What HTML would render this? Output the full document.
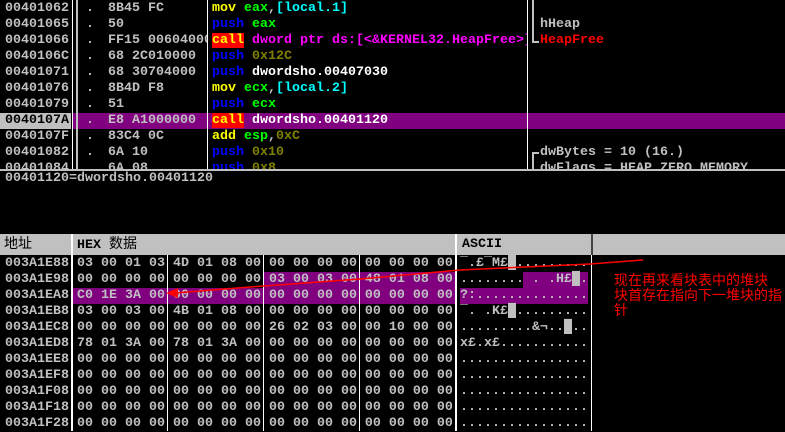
<!DOCTYPE html>
<html><head><meta charset="utf-8"><style>
*{margin:0;padding:0}
body{width:785px;height:431px;background:#000;position:relative;overflow:hidden;font-family:"Liberation Mono","Noto Sans CJK SC",monospace;font-size:13.33px;color:#c0c0c0;font-weight:bold}
.a{position:absolute;white-space:pre;line-height:16px}
.v{position:absolute;background:#c0c0c0;width:2px}
.y{color:#ffff00}.g{color:#00ff00}.c{color:#00ffff}.b{color:#0000ff}.o{color:#808000}.m{color:#ff00ff}.w{color:#fff}.r{color:#ff0000}
.cl{background:#ff0000;color:#ffff00}
.p{position:absolute;background:#800080}
</style></head><body>
<div style="position:absolute;left:0;top:0;width:785px;height:169px;overflow:hidden">
<div class="p" style="left:72px;top:113px;width:713px;height:16px"></div>
<div style="position:absolute;left:0;top:113px;width:71px;height:16px;background:#c0c0c0"></div>
<div class="a" style="left:5px;top:1px">00401062
00401065
00401066
0040106C
00401071
00401076
00401079
<span style="color:#000">0040107A</span>
0040107F
00401082
00401084</div>
<div class="a" style="left:86px;top:1px">.
.
.
.
.
.
.
.
.
.
.</div>
<div style="position:absolute;left:108px;top:0;width:99px;height:169px;overflow:hidden"><div class="a" style="left:0;top:1px">8B45 FC
50
FF15 00604000
68 2C010000
68 30704000
8B4D F8
51
E8 A1000000
83C4 0C
6A 10
6A 08</div></div>
<div style="position:absolute;left:212px;top:0;width:315px;height:169px;overflow:hidden"><div class="a" style="left:0;top:1px"><span class="y">mov</span> <span class="g">eax</span>,<span class="c">[local.1]</span>
<span class="b">push</span> <span class="g">eax</span>
<span class="cl">call</span> <span class="m">dword ptr ds:[&lt;&amp;KERNEL32.HeapFree&gt;]</span>
<span class="b">push</span> <span class="o">0x12C</span>
<span class="b">push</span> <span class="w">dwordsho.00407030</span>
<span class="y">mov</span> <span class="g">ecx</span>,<span class="c">[local.2]</span>
<span class="b">push</span> <span class="g">ecx</span>
<span class="cl">call</span> <span class="w">dwordsho.00401120</span>
<span class="y">add</span> <span class="g">esp</span>,<span class="o">0xC</span>
<span class="b">push</span> <span class="o">0x10</span>
<span class="b">push</span> <span class="o">0x8</span></div></div>
<div class="a" style="left:540px;top:1px">
hHeap
<span class="r">HeapFree</span>






dwBytes = 10 (16.)
dwFlags = HEAP_ZERO_MEMORY</div>
<div class="v" style="left:532px;top:0;height:43px;width:2px"></div>
<div class="v" style="left:532px;top:41px;height:2px;width:7px"></div>
<div class="v" style="left:532px;top:152px;height:17px;width:2px"></div>
<div class="v" style="left:532px;top:152px;height:2px;width:7px"></div>
<div class="v" style="left:72px;top:0;height:169px;width:1px;background:#fff"></div>
<div class="v" style="left:76px;top:0;height:169px"></div>
<div class="v" style="left:207px;top:0;height:169px;width:1px;background:#fff"></div>
<div class="v" style="left:527px;top:0;height:169px;width:1px;background:#fff"></div>
</div>
<div style="position:absolute;left:0;top:169px;width:785px;height:2px;background:#c0c0c0"></div>
<div class="a" style="left:5px;top:171px">00401120=dwordsho.00401120</div>
<div style="position:absolute;left:0;top:234px;width:785px;height:21px;background:#c0c0c0;color:#000"></div>
<div class="a" style="left:4px;top:236px;color:#000;font-weight:normal;font-size:14px;line-height:18px">地址</div>
<div class="a" style="left:77px;top:236px;color:#000;line-height:18px">HEX <span style="font-weight:normal;font-size:14px">数据</span></div>
<div class="a" style="left:462px;top:236px;color:#000;line-height:18px">ASCII</div>
<div class="v" style="left:71px;top:234px;height:21px;background:#fff;width:2px"></div>
<div class="v" style="left:455px;top:234px;height:21px;background:#fff;width:2px"></div>
<div class="v" style="left:591px;top:234px;height:21px;background:#444;width:2px"></div>
<div class="p" style="left:263px;top:272px;width:325px;height:16px"></div>
<div class="p" style="left:72px;top:288px;width:516px;height:16px"></div>
<div style="position:absolute;left:457px;top:272px;width:66px;height:16px;background:#000"></div>
<div style="position:absolute;left:457px;top:288px;width:3px;height:16px;background:#000"></div>
<div class="a" style="left:5px;top:256px">003A1E88
003A1E98
003A1EA8
003A1EB8
003A1EC8
003A1ED8
003A1EE8
003A1EF8
003A1F08
003A1F18
003A1F28</div>
<div class="a" style="left:77px;top:256px">03 00 01 03 4D 01 08 00 00 00 00 00 00 00 00 00
00 00 00 00 00 00 00 00 03 00 03 00 48 01 08 00
C0 1E 3A 00 00 00 00 00 00 00 00 00 00 00 00 00
03 00 03 00 4B 01 08 00 00 00 00 00 00 00 00 00
00 00 00 00 00 00 00 00 26 02 03 00 00 10 00 00
78 01 3A 00 78 01 3A 00 00 00 00 00 00 00 00 00
00 00 00 00 00 00 00 00 00 00 00 00 00 00 00 00
00 00 00 00 00 00 00 00 00 00 00 00 00 00 00 00
00 00 00 00 00 00 00 00 00 00 00 00 00 00 00 00
00 00 00 00 00 00 00 00 00 00 00 00 00 00 00 00
00 00 00 00 00 00 00 00 00 00 00 00 00 00 00 00</div>
<div class="a" style="left:460px;top:256px">‾.£‾M£█.........
........ . .H£█.
?:..............
‾. .K£█.........
.........&¬..█..
x£.x£...........
................
................
................
................
................</div>
<div class="v" style="left:71px;top:255px;height:176px;background:#fff;width:2px"></div>
<div class="v" style="left:167px;top:255px;height:176px;background:#fff;width:1px"></div>
<div class="v" style="left:263px;top:255px;height:176px;background:#fff;width:1px"></div>
<div class="v" style="left:359px;top:255px;height:176px;background:#fff;width:1px"></div>
<div class="v" style="left:455px;top:255px;height:176px;background:#fff;width:2px"></div>
<div class="v" style="left:591px;top:255px;height:176px;background:#fff;width:1px"></div>
<svg style="position:absolute;left:0;top:0" width="785" height="431"><polyline points="643,260 590,264 460,270 360,279 250,287 175,293" fill="none" stroke="#ff0000" stroke-width="1.5"/><polygon points="166,293 178,288 178,298" fill="#ff0000"/></svg>
<div class="a r" style="left:614px;top:273px;font-family:'Noto Sans CJK SC',sans-serif;font-weight:normal;font-size:14px;line-height:15px">现在再来看块表中的堆块
块首存在指向下一堆块的指
针</div>
</body></html>
